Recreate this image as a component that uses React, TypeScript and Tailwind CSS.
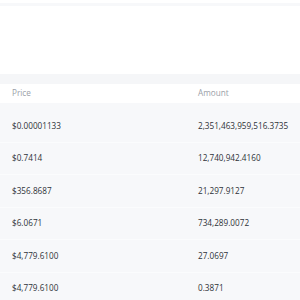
const rows = [
  { price: "$0.00001133", amount: "2,351,463,959,516.3735" },
  { price: "$0.7414", amount: "12,740,942.4160" },
  { price: "$356.8687", amount: "21,297.9127" },
  { price: "$6.0671", amount: "734,289.0072" },
  { price: "$4,779.6100", amount: "27.0697" },
  { price: "$4,779.6100", amount: "0.3871" },
];

export default function App() {
  return (
    <div className="h-[300px] w-[300px] overflow-hidden bg-white font-['Open_Sans',sans-serif]">
      <div className="mt-[3px] h-[3px] bg-[#f7f8fa]" />
      <div className="h-[68px]" />
      <div className="h-[10px] bg-[#f5f6f8]" />
      <div className="grid h-[19px] grid-cols-[186px_1fr] items-center bg-white px-3 text-[8.2px] text-[#9aa0a8]">
        <span>Price</span>
        <span>Amount</span>
      </div>
      <div className="bg-[#f7f8fa] pt-[7px]">
        {rows.map((r, i) => (
          <div
            key={i}
            className="grid h-[32.5px] grid-cols-[186px_1fr] items-center border-b border-[#fbfcfd] px-3 text-[8.2px] font-medium text-[#2e3238]"
          >
            <span>{r.price}</span>
            <span>{r.amount}</span>
          </div>
        ))}
      </div>
    </div>
  );
}
